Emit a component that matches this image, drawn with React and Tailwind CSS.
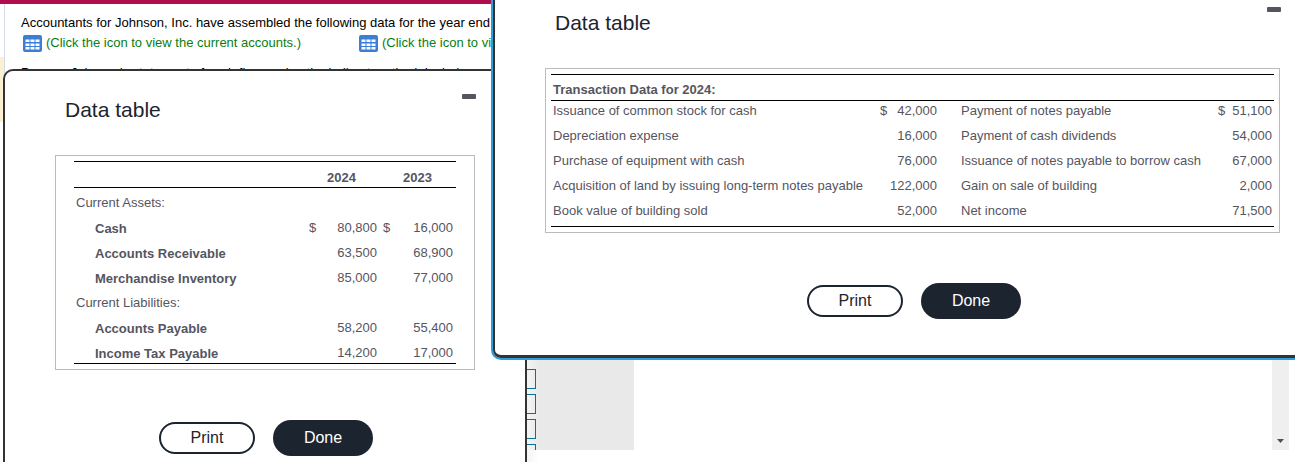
const currentRows = [
  { type: "head", label: "Current Assets:" },
  { label: "Cash", sign: "$", a: "80,800", sign2: "$", b: "16,000" },
  { label: "Accounts Receivable", a: "63,500", b: "68,900" },
  { label: "Merchandise Inventory", a: "85,000", b: "77,000" },
  { type: "head", label: "Current Liabilities:" },
  { label: "Accounts Payable", a: "58,200", b: "55,400" },
  { label: "Income Tax Payable", a: "14,200", b: "17,000" },
];

const transactionRows = [
  ["Issuance of common stock for cash", "$", "42,000", "Payment of notes payable", "$", "51,100"],
  ["Depreciation expense", "", "16,000", "Payment of cash dividends", "", "54,000"],
  ["Purchase of equipment with cash", "", "76,000", "Issuance of notes payable to borrow cash", "", "67,000"],
  ["Acquisition of land by issuing long-term notes payable", "", "122,000", "Gain on sale of building", "", "2,000"],
  ["Book value of building sold", "", "52,000", "Net income", "", "71,500"],
];

function GridIcon() {
  return (
    <svg width="19" height="17" viewBox="0 0 19 17" className="shrink-0">
      <rect width="19" height="17" rx="2" fill="#3a7ed6" />
      {[4.5, 8.5, 12].map((y) =>
        [2.5, 7.5, 12.5].map((x) => <rect key={`${x}-${y}`} x={x} y={y} width="4" height="2.5" fill="#fff" />)
      )}
    </svg>
  );
}

function Buttons() {
  return (
    <div className="flex items-center gap-[18px]">
      <button className="w-[96px] h-[32px] rounded-full border-2 border-[#1c2430] bg-white text-[16px] text-[#1c2430]">
        Print
      </button>
      <button className="w-[100px] h-[36px] rounded-full bg-[#1c2430] text-[16px] text-white">Done</button>
    </div>
  );
}

function CurrentTable() {
  return (
    <div className="ml-[50px] w-[420px] h-[215px] border border-[#bbbbbb] px-[18px] pt-[5px]">
      <div className="border-t border-b border-black h-[27px] flex items-center pt-[6px] font-bold text-[#55555f]">
        <span className="ml-[253px] w-[38px]">2024</span>
        <span className="ml-[38px]">2023</span>
      </div>
      <div className="border-b border-black pt-[3px] h-[176px]">
        {currentRows.map((r) =>
          r.type === "head" ? (
            <div key={r.label} className="h-[25px] pl-[2px] leading-[23px] text-[#55555f]">
              {r.label}
            </div>
          ) : (
            <div key={r.label} className="h-[25px] last:h-[22px] flex items-start leading-[25px] text-[#55555f]">
              <span className="w-[235px] pl-[21px] font-bold">{r.label}</span>
              <span className="w-[68px] flex justify-between -mt-[1px]">
                <span>{r.sign}</span>
                <span>{r.a}</span>
              </span>
              <span className="w-[76px] pl-[6px] flex justify-between -mt-[1px]">
                <span>{r.sign2}</span>
                <span>{r.b}</span>
              </span>
            </div>
          )
        )}
      </div>
    </div>
  );
}

function TransactionTable() {
  return (
    <div className="ml-[50px] w-[735px] h-[165px] border border-[#bbbbbb] px-[5px] pt-[5px]">
      <div className="border-t border-b border-black h-[27px] flex items-center pt-[4px] pl-[2px] font-bold text-[#55555f]">
        Transaction Data for 2024:
      </div>
      <div className="border-b border-black h-[126px]">
        {transactionRows.map((r) => (
          <div key={r[0]} className="h-[25px] flex items-start leading-[20px] text-[#55555f]">
            <span className="w-[329px] pl-[2px]">{r[0]}</span>
            <span className="w-[57px] flex justify-between">
              <span>{r[1]}</span>
              <span>{r[2]}</span>
            </span>
            <span className="w-[281px] pl-[24px]">{r[3]}</span>
            <span className="w-[54px] flex justify-between">
              <span>{r[4]}</span>
              <span>{r[5]}</span>
            </span>
          </div>
        ))}
      </div>
    </div>
  );
}

export default function App() {
  return (
    <div className="relative w-[1295px] h-[462px] overflow-hidden bg-white font-['Liberation_Sans',Arial,sans-serif] text-[13px]">
      {/* page behind the dialogs */}
      <div className="h-[4px] bg-[#b00d4c]" />
      <div className="flex h-[458px]">
        <div className="w-[5px] h-[118px] pt-[53px] border-r border-[#d5dbe6]">
          <div className="h-[65px] bg-[#fbf0d2]" />
        </div>
        <div className="pl-[16px] pt-[10px] text-black">
          <p className="leading-[18px] whitespace-nowrap w-[469px] overflow-hidden">
            Accountants for Johnson, Inc. have assembled the following data for the year ended December 31, 2024.
          </p>
          <div className="flex mt-[2px] ml-[2px] text-[#0b7d12] leading-[18px]">
            <span className="flex items-center gap-[4px] w-[336px]">
              <GridIcon />
              (Click the icon to view the current accounts.)
            </span>
            <span className="flex items-center gap-[4px]">
              <GridIcon />
              (Click the icon to view the transaction data.)
            </span>
          </div>
          <p className="mt-[12px] leading-[18px] whitespace-nowrap">
            Prepare Johnson's statement of cash flows using the indirect method. Include a separate section.
          </p>
        </div>
      </div>

      {/* stuff peeking out under the second dialog */}
      <div className="absolute left-[527px] top-[359px] w-[107px] h-[91px] bg-[#e9e9e9]" />
      <div className="absolute left-[527px] top-[359px] w-[12px] h-[103px] bg-linear-to-r from-[#f4f4f4] to-transparent" />
      <div className="absolute left-[527px] top-[359px] h-[91px] flex flex-col gap-[5px] pt-[10px] overflow-hidden">
        {[0, 1, 2, 3].map((i) => (
          <div key={i} className="w-[9px] h-[20px] shrink-0 border border-l-0 border-[#0a7290]" />
        ))}
      </div>
      <div className="absolute left-[1272px] top-[359px] w-[17px] h-[91px] bg-[#efefef] flex items-end justify-center pb-[7px]">
        <svg width="7" height="4" viewBox="0 0 7 4">
          <path d="M0 0h7L3.5 4z" fill="#505050" />
        </svg>
      </div>

      {/* first dialog */}
      <div className="absolute left-[3px] top-[69px] w-[524px] h-[420px] bg-white border-2 border-[#333333] rounded-tl-[10px]">
        <div className="absolute left-[457px] top-[23px] w-[14px] h-[5px] bg-[#555560] rounded-[1px]" />
        <h2 className="pl-[60px] pt-[26px] text-[21px] leading-[26px] text-[#1c2430]">Data table</h2>
        <div className="mt-[32px]">
          <CurrentTable />
        </div>
        <div className="mt-[50px] ml-[154px]">
          <Buttons />
        </div>
      </div>

      {/* second dialog */}
      <div className="absolute left-[491px] top-[-20px] w-[860px] h-[380px] bg-white border-2 border-[#2a9fd8] rounded-bl-[10px]">
        <div className="w-full h-full border-2 border-b-[3px] border-t-0 border-r-0 border-[#333333] rounded-bl-[8px]">
          <div className="absolute left-[774px] top-[25px] w-[14px] h-[5px] bg-[#555560] rounded-[1px]" />
          <h2 className="pl-[60px] pt-[28px] text-[21px] leading-[26px] text-[#1c2430]">Data table</h2>
          <div className="mt-[32px]">
            <TransactionTable />
          </div>
          <div className="mt-[50px] ml-[312px]">
            <Buttons />
          </div>
        </div>
      </div>
    </div>
  );
}
